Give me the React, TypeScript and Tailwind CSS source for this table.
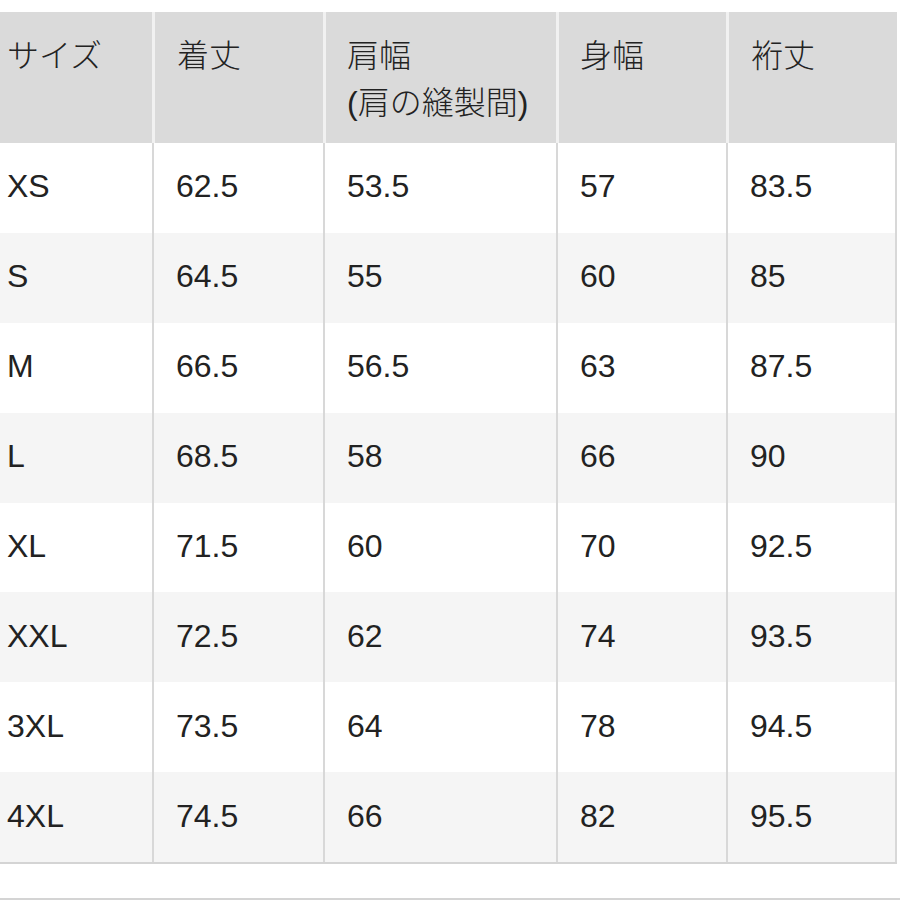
import React from "react";

const rows: string[][] = [
  ["XS", "62.5", "53.5", "57", "83.5"],
  ["S", "64.5", "55", "60", "85"],
  ["M", "66.5", "56.5", "63", "87.5"],
  ["L", "68.5", "58", "66", "90"],
  ["XL", "71.5", "60", "70", "92.5"],
  ["XXL", "72.5", "62", "74", "93.5"],
  ["3XL", "73.5", "64", "78", "94.5"],
  ["4XL", "74.5", "66", "82", "95.5"],
];

const cols = "grid grid-cols-[152px_171px_233px_170px_171px]";

export default function App() {
  return (
    <div
      className="w-[900px] h-[900px] bg-white text-[#222222] font-light overflow-hidden"
      style={{ fontFamily: '"Liberation Sans", "Noto Sans CJK JP", sans-serif' }}
    >
      <div className="pt-[12px] w-[897px]">
        {/* header */}
        <div className={`${cols} h-[131px] bg-[#dadada] text-[32px] leading-[47px]`}>
          <div className="pl-[7px] pt-[21px]">サイズ</div>
          <div className="pl-[22px] pt-[21px] border-l-[3px] border-[#f1f1f1]">着丈</div>
          <div className="pl-[21px] pt-[21px] border-l-[3px] border-[#f1f1f1]">
            <div>肩幅</div>
            <div>(肩の縫製間)</div>
          </div>
          <div className="pl-[21px] pt-[21px] border-l-[3px] border-[#f1f1f1]">身幅</div>
          <div className="pl-[22px] pt-[21px] border-l-[3px] border-[#f1f1f1]">裄丈</div>
        </div>

        {/* body */}
        <div className="border-b-2 border-[#d4d4d4]">
          {rows.map((r, i) => (
            <div
              key={r[0]}
              className={`${cols} h-[89.9px] text-[32px] ${i % 2 === 1 ? "bg-[#f5f5f5]" : "bg-white"}`}
            >
              {r.map((v, j) => (
                <div
                  key={j}
                  className={`flex items-center pb-[3px] ${
                    j === 0 ? "pl-[7px]" : "pl-[22px] border-l-2 border-[#d8d8d8]"
                  } ${j === 3 ? "pl-[21px]" : ""} ${j === 4 ? "border-r-2" : ""}`}
                >
                  {v}
                </div>
              ))}
            </div>
          ))}
        </div>
      </div>
      <div className="mt-[34px] border-t-2 border-[#d4d4d4]" />
    </div>
  );
}
